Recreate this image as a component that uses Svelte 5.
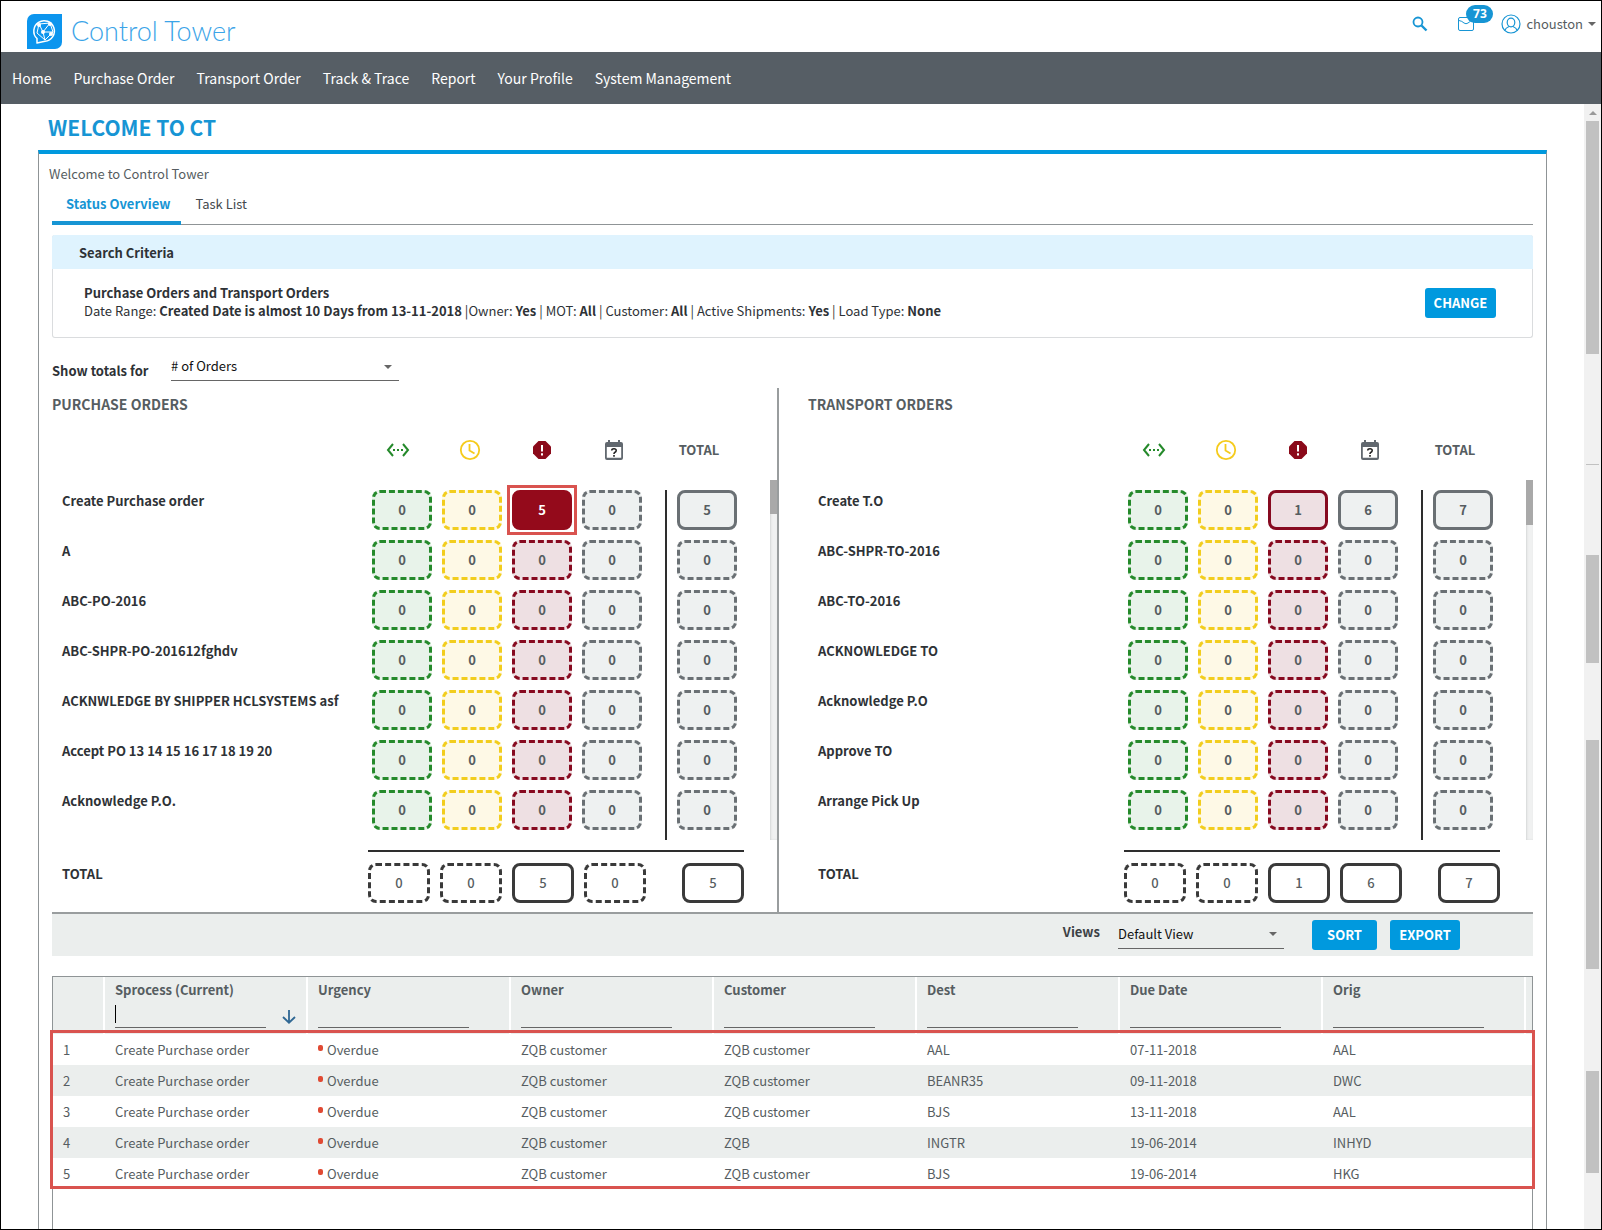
<script lang="ts">
	type Tone = 'green' | 'yellow' | 'red' | 'grey';
	type Row = { name: string; values: number[]; total: number };
	type Section = { id: string; title: string; rows: Row[]; totals: number[]; total: number };

	const tones: Tone[] = ['green', 'yellow', 'red', 'grey'];
	const menu = ['Home', 'Purchase Order', 'Transport Order', 'Track & Trace', 'Report', 'Your Profile', 'System Management'];

	const empty = (name: string): Row => ({ name, values: [0, 0, 0, 0], total: 0 });

	const sections: Section[] = [
		{
			id: 'po',
			title: 'PURCHASE ORDERS',
			rows: [
				{ name: 'Create Purchase order', values: [0, 0, 5, 0], total: 5 },
				empty('A'),
				empty('ABC-PO-2016'),
				empty('ABC-SHPR-PO-201612fghdv'),
				empty('ACKNWLEDGE BY SHIPPER HCLSYSTEMS asf'),
				empty('Accept PO 13 14 15 16 17 18 19 20'),
				empty('Acknowledge P.O.')
			],
			totals: [0, 0, 5, 0],
			total: 5
		},
		{
			id: 'to',
			title: 'TRANSPORT ORDERS',
			rows: [
				{ name: 'Create T.O', values: [0, 0, 1, 6], total: 7 },
				empty('ABC-SHPR-TO-2016'),
				empty('ABC-TO-2016'),
				empty('ACKNOWLEDGE TO'),
				empty('Acknowledge P.O'),
				empty('Approve TO'),
				empty('Arrange Pick Up')
			],
			totals: [0, 0, 1, 6],
			total: 7
		}
	];

	const columns = ['Sprocess (Current)', 'Urgency', 'Owner', 'Customer', 'Dest', 'Due Date', 'Orig'];
	const orders = [
		['Create Purchase order', 'Overdue', 'ZQB customer', 'ZQB customer', 'AAL', '07-11-2018', 'AAL'],
		['Create Purchase order', 'Overdue', 'ZQB customer', 'ZQB customer', 'BEANR35', '09-11-2018', 'DWC'],
		['Create Purchase order', 'Overdue', 'ZQB customer', 'ZQB customer', 'BJS', '13-11-2018', 'AAL'],
		['Create Purchase order', 'Overdue', 'ZQB customer', 'ZQB', 'INGTR', '19-06-2014', 'INHYD'],
		['Create Purchase order', 'Overdue', 'ZQB customer', 'ZQB customer', 'BJS', '19-06-2014', 'HKG']
	];

	// selected status box: section id, row, column
	let selected = $state('po-0-2');
	let tab = $state('status');
</script>

<div class="app">
	<header class="topbar">
		<a class="brand" href="#home">
			<svg width="35" height="35" viewBox="0 0 35 35">
				<path d="M7 0H35V28A7 7 0 0 1 28 35H0V7A7 7 0 0 1 7 0Z" fill="#0c95ee" />
				<g fill="none" stroke="#fff" stroke-width="1.5" stroke-linejoin="round">
					<path d="M10 24.500A10.300 10.300 0 1 1 18 27.300L10 29Z" />
					<path d="M12 10 23 9 26 18 18 26 10 19ZM12 10 16 18 26 18M23 9 16 18 18 26" stroke-width="1" />
				</g>
				<g fill="#fff"><circle cx="12" cy="11" r="2" /><circle cx="23" cy="10" r="2" /><circle cx="16" cy="18" r="2" /><circle cx="24" cy="20" r="2" /></g>
			</svg>
			<span>Control Tower</span>
		</a>
		<div class="tools">
			<button class="icon-btn" aria-label="Search">
				<svg width="16" height="16" viewBox="0 0 16 16" fill="none" stroke="#1795d4">
					<circle cx="6" cy="6" r="4.500" stroke-width="1.800" />
					<path d="M9.500 9.500 14.500 14.500" stroke-width="2.400" />
				</svg>
			</button>
			<button class="icon-btn mail" aria-label="Messages">
				<svg width="18" height="16" viewBox="0 0 18 16" fill="none" stroke="#1795d4">
					<rect x="1.500" y="1.500" width="15" height="13" rx="1.500" />
					<path d="M2 4.500Q5 5 7 7Q9 8.500 11 7Q13 5 16 4.500" />
				</svg>
				<span class="badge">73</span>
			</button>
			<button class="icon-btn user">
				<svg width="20" height="20" viewBox="0 0 20 20" fill="none" stroke="#1795d4" stroke-width="1.200">
					<circle cx="10" cy="10" r="9" />
					<ellipse cx="10" cy="8.500" rx="3.800" ry="4.300" />
					<path d="M3.800 16.500Q4.500 14 8 12.500M16.200 16.500Q15.500 14 12 12.500" />
				</svg>
				<span>chouston</span>
				<svg width="8" height="4" viewBox="0 0 8 4"><path d="M0 0H8L4 4Z" fill="#666" /></svg>
			</button>
		</div>
	</header>

	<nav class="menu">
		{#each menu as item}
			<a href="#menu">{item}</a>
		{/each}
	</nav>

	<div class="body">
		<main>
			<h1>WELCOME TO CT</h1>
			<div class="panel">
				<p class="intro">Welcome to Control Tower</p>
				<div class="tabs" role="tablist">
					<button role="tab" class:active={tab === 'status'} aria-selected={tab === 'status'} onclick={() => (tab = 'status')}>Status Overview</button>
					<button role="tab" class:active={tab === 'tasks'} aria-selected={tab === 'tasks'} onclick={() => (tab = 'tasks')}>Task List</button>
				</div>

				<section class="criteria">
					<h2>Search Criteria</h2>
					<div class="criteria-body">
						<p>
							<b>Purchase Orders and Transport Orders</b><br />
							Date Range: <b>Created Date is almost 10 Days from 13-11-2018</b> |Owner: <b>Yes</b> | MOT: <b>All</b> | Customer: <b>All</b> | Active Shipments: <b>Yes</b> | Load Type: <b>None</b>
						</p>
						<button class="btn">CHANGE</button>
					</div>
				</section>

				<div class="totals-for">
					<label for="totals">Show totals for</label>
					<div class="select">
						<select id="totals"><option># of Orders</option></select>
						<svg width="8" height="4" viewBox="0 0 8 4"><path d="M0 0H8L4 4Z" fill="#666" /></svg>
					</div>
				</div>

				<div class="overview">
					{#each sections as section, s}
						{#if s > 0}<div class="split"></div>{/if}
						<section class="status">
							<h3>{section.title}</h3>
							<div class="legend">
								<svg width="24" height="20" viewBox="0 0 24 20" fill="none" stroke="#258a2b" stroke-width="2">
									<path d="M7 4 2 10 7 16M17 4 22 10 17 16" />
									<path d="M7 10H17" stroke-dasharray="2 2" />
								</svg>
								<svg width="22" height="22" viewBox="0 0 22 22" fill="none" stroke="#f5cb1c" stroke-width="1.800">
									<circle cx="11" cy="11" r="9.200" />
									<path d="M10.500 5V11.500L15.500 14.500" />
								</svg>
								<svg width="20" height="20" viewBox="0 0 20 20">
									<path d="M6.500 1H13.500L19 6.500V13.500L13.500 19H6.500L1 13.500V6.500Z" fill="#8b0a1a" />
									<path d="M10 5V11.500M10 13.300V15.500" stroke="#fff" stroke-width="2" />
								</svg>
								<svg width="20" height="22" viewBox="0 0 20 22">
									<path d="M4 1H6V3H14V1H16V3H17A2 2 0 0 1 19 5V19A2 2 0 0 1 17 21H3A2 2 0 0 1 1 19V5A2 2 0 0 1 3 3H4ZM2.800 8V18.700H17.200V8Z" fill="#61686f" fill-rule="evenodd" />
									<path d="M7.700 11.500Q7.800 9.800 10 9.800Q12.300 9.800 12.200 11.600Q12 12.800 10.700 13.400Q10 13.900 10 15M10 16V17.800" fill="none" stroke="#222" stroke-width="1.600" />
								</svg>
								<b>TOTAL</b>
							</div>
							<div class="scroller">
								<div class="rows">
									{#each section.rows as row, r}
										<div class="row">
											<span class="name">{row.name}</span>
											{#each row.values as value, c}
												{@const key = `${section.id}-${r}-${c}`}
												<button
													class="box {tones[c]}"
													class:filled={value > 0}
													class:selected={selected === key}
													onclick={() => (selected = key)}>{value}</button>
											{/each}
											<span class="total"><button class="box grey" class:filled={row.total > 0}>{row.total}</button></span>
										</div>
									{/each}
								</div>
								<div class="track"><div class="thumb {section.id}"></div></div>
							</div>
							<div class="sum">
								<span class="name">TOTAL</span>
								<div class="sum-boxes">
									{#each section.totals as value}
										<button class="box dark" class:filled={value > 0}>{value}</button>
									{/each}
									<button class="box dark last" class:filled={section.total > 0}>{section.total}</button>
								</div>
							</div>
						</section>
					{/each}
				</div>

				<div class="toolbar">
					<label for="views">Views</label>
					<div class="select">
						<select id="views"><option>Default View</option></select>
						<svg width="8" height="4" viewBox="0 0 8 4"><path d="M0 0H8L4 4Z" fill="#666" /></svg>
					</div>
					<button class="btn sort">SORT</button>
					<button class="btn export">EXPORT</button>
				</div>

				<div class="grid">
					<table>
						<colgroup>
							<col class="num" />
							{#each columns as _}<col />{/each}
							<col class="end" />
						</colgroup>
						<thead>
							<tr>
								<th></th>
								{#each columns as column, i}
									<th>
										<label for="filter-{i}">{column}</label>
										<div class="filter">
											<input id="filter-{i}" type="text" />
											{#if i === 0}
												<i class="caret"></i>
												<svg width="14" height="14" viewBox="0 0 14 14" fill="none" stroke="#2f6793" stroke-width="1.800"><path d="M7 0V12.500M1 7 7 12.700 13 7" /></svg>
											{/if}
										</div>
									</th>
								{/each}
								<th></th>
							</tr>
						</thead>
						<tbody>
							{#each orders as order, n}
								<tr>
									<td>{n + 1}</td>
									{#each order as cell, i}
										<td>{#if i === 1}<i class="dot"></i>{/if}{cell}</td>
									{/each}
									<td></td>
								</tr>
							{/each}
						</tbody>
					</table>
					<div class="highlight"></div>
				</div>
			</div>
		</main>

		<div class="page-scroll">
			<svg width="8" height="4" viewBox="0 0 8 4"><path d="M0 4H8L4 0Z" fill="#999" /></svg>
			<div class="bar b1"></div>
			<div class="bar tick"></div>
			<div class="bar b2"></div>
			<div class="bar b3"></div>
			<div class="bar b4"></div>
		</div>
	</div>
</div>

<style>
	:global(body) {
		margin: 0;
	}
	.app,
	.app :global(*) {
		box-sizing: border-box;
	}
	.app {
		--blue: #0099de;
		--line: #8f9496;
		--soft: #ebeeed;
		display: flex;
		flex-direction: column;
		min-height: 100vh;
		border: 1px solid #000;
		background: #fff;
		color: #565d61;
		font: 13px/18px 'Noto Sans CJK SC', 'Noto Sans', sans-serif;
	}
	button,
	select,
	input {
		margin: 0;
		padding: 0;
		border: 0;
		background: none;
		color: inherit;
		font: inherit;
	}
	button {
		cursor: pointer;
	}
	svg {
		display: block;
		flex: none;
	}
	a {
		color: inherit;
		text-decoration: none;
	}

	.topbar {
		display: flex;
		justify-content: space-between;
		height: 51px;
		padding: 0 5px 0 26px;
	}
	.brand {
		display: flex;
		align-items: center;
		gap: 9px;
		padding-top: 9px;
		color: #3ba4e8;
		font: 300 27px/32px Lato, sans-serif;
	}
	.tools {
		display: flex;
		align-items: center;
		height: 46px;
	}
	.icon-btn {
		display: flex;
		align-items: center;
	}
	.mail {
		position: relative;
		margin: 0 26px 0 29px;
	}
	.badge {
		position: absolute;
		left: 9px;
		top: -11px;
		width: 27px;
		border-radius: 9px;
		background: #1795d4;
		color: #fff;
		font: bold 12px/18px 'Open Sans', sans-serif;
	}
	.user {
		gap: 5px;
	}

	.menu {
		display: flex;
		align-items: center;
		gap: 22px;
		height: 52px;
		padding: 0 11px;
		background: #565e65;
		color: #fff;
		font-size: 14px;
	}

	.body {
		display: flex;
		flex: 1;
	}
	main {
		display: flex;
		flex: 1;
		flex-direction: column;
		padding: 0 37px;
	}
	h1 {
		margin: 0;
		padding: 9px 10px;
		color: #1795d4;
		font-size: 21px;
		line-height: 28px;
	}
	.panel {
		flex: 1;
		display: flex;
		flex-direction: column;
		padding: 0 13px;
		border: 1px solid var(--line);
		border-width: 4px 1px 0;
		border-top-color: var(--blue);
	}
	.intro {
		margin: 0 -3px;
		padding: 11px 0 9px;
	}
	.tabs {
		display: flex;
		height: 33px;
		border-bottom: 1px solid var(--line);
		color: #44494d;
	}
	.tabs button {
		height: 33px;
		padding: 0 11px 5px 14px;
		border-bottom: 4px solid transparent;
	}
	.tabs .active {
		border-color: #1795d4;
		color: #1795d4;
		font-weight: bold;
	}

	.criteria {
		margin-top: 10px;
		border: 1px solid #dadcde;
		border-top: 0;
		border-radius: 3px;
		color: #2e3236;
	}
	.criteria h2 {
		margin: 0 -1px;
		padding: 9px 27px 7px;
		border-radius: 3px 3px 0 0;
		background: #dff3fe;
		font-size: 13px;
		line-height: 18px;
	}
	.criteria-body {
		display: flex;
		align-items: center;
		justify-content: space-between;
		height: 68px;
		padding: 0 36px 0 31px;
	}
	.criteria-body p {
		margin: 0 0 2px;
	}
	.btn {
		width: 71px;
		height: 30px;
		border-radius: 3px;
		background: var(--blue);
		color: #fff;
		font-weight: bold;
	}

	.totals-for {
		display: flex;
		height: 50px;
		color: #2e3236;
		font-weight: bold;
	}
	.totals-for label {
		width: 119px;
		padding-top: 24px;
	}
	.select {
		position: relative;
		display: flex;
		align-items: center;
		width: 228px;
		height: 28px;
		border-bottom: 1px solid #666;
		color: #111;
		font-weight: normal;
	}
	.totals-for .select {
		margin-top: 15px;
	}
	.totals-for select {
		padding-bottom: 2px;
	}
	.select select {
		width: 100%;
		height: 27px;
		appearance: none;
	}
	.select svg {
		position: absolute;
		right: 7px;
		pointer-events: none;
	}

	.overview {
		display: flex;
		border-bottom: 2px solid #999d9e;
	}
	.split {
		width: 2px;
		margin-right: 29px;
		background: #999d9e;
	}
	.status {
		flex: 1;
		min-width: 0;
		padding-bottom: 9px;
	}
	h3 {
		margin: 0;
		padding: 6px 0;
		font-size: 14px;
		line-height: 20px;
	}
	.legend {
		display: grid;
		grid-template-columns: repeat(4, 72px) 98px;
		justify-content: end;
		justify-items: center;
		align-items: center;
		height: 60px;
		padding-right: 29px;
	}
	.scroller {
		display: flex;
		height: 360px;
	}
	.rows {
		flex: 1;
		padding-top: 10px;
	}
	.row {
		display: flex;
		gap: 10px;
		height: 50px;
	}
	.name {
		flex: 1;
		padding-left: 10px;
		color: #2e3236;
		font-weight: bold;
		line-height: 22px;
	}
	.box {
		position: relative;
		width: 60px;
		height: 40px;
		border: 3px dashed;
		border-radius: 8px;
		color: #565d61;
		font-weight: bold;
		text-align: center;
	}
	.box.filled {
		border-style: solid;
	}
	.green {
		border-color: #258a2b;
		background: #e8f3ea;
	}
	.yellow {
		border-color: #f2cd1e;
		background: #fef9e6;
	}
	.red {
		border-color: #870a20;
		background: #eee0e3;
	}
	.grey {
		border-color: #6a7074;
		background: #eef1f1;
	}
	.dark {
		width: 62px;
		border-color: #3a3a3a;
		font-weight: 500;
	}
	.box.selected {
		background: #940a1b;
		border-color: #940a1b;
		color: #fff;
	}
	.box.selected::after {
		content: '';
		position: absolute;
		inset: -8px;
		border: 3px solid #d9534f;
	}
	.total {
		height: 50px;
		margin: 0 33px 0 13px;
		padding-left: 10px;
		border-left: 2px solid #2e2e2e;
	}
	.track {
		width: 7px;
		background: #f0f1f1;
		box-shadow: inset 1px 0 2px #d5d7d7;
	}
	.thumb {
		height: 34px;
		background: #a9a9a9;
	}
	.thumb.to {
		height: 45px;
	}
	.sum {
		display: flex;
		padding: 10px 33px 0 0;
	}
	.sum .name {
		padding-top: 13px;
	}
	.sum-boxes {
		display: flex;
		gap: 10px;
		padding-top: 11px;
		border-top: 2px solid #2e2e2e;
	}
	.last {
		margin-left: 26px;
	}

	.toolbar {
		display: flex;
		justify-content: flex-end;
		height: 42px;
		padding: 6px 73px 0 0;
		background: var(--soft);
	}
	.toolbar label {
		margin: 3px 18px 0 0;
		color: #3c4145;
		font-weight: bold;
	}
	.toolbar .select {
		width: 166px;
		height: 29px;
		margin-right: 28px;
	}
	.toolbar .sort {
		width: 65px;
		margin-right: 13px;
	}
	.toolbar .export {
		width: 70px;
	}

	.grid {
		position: relative;
		flex: 1;
		margin-top: 20px;
		border: 1px solid var(--line);
		border-bottom: 0;
	}
	table {
		width: 100%;
		border-collapse: separate;
		border-spacing: 0;
		table-layout: fixed;
	}
	.num {
		width: 52px;
	}
	.end {
		width: 6px;
	}
	th {
		height: 57px;
		padding: 4px 0 0 10px;
		border-right: 2px solid #fff;
		background: var(--soft);
		text-align: left;
		vertical-align: top;
	}
	th:last-child,
	td:last-child {
		padding: 0;
		border: 0;
	}
	th label {
		display: block;
	}
	.filter {
		position: relative;
		display: flex;
		align-items: flex-end;
		gap: 16px;
	}
	.filter input {
		width: 151px;
		height: 29px;
		border-bottom: 1px solid #666;
		outline: none;
	}
	.filter svg {
		margin-bottom: 4px;
	}
	.caret {
		position: absolute;
		left: 0;
		top: 6px;
		width: 1px;
		height: 18px;
		background: #000;
	}
	td {
		height: 31px;
		padding: 0 0 0 10px;
	}
	tbody tr:nth-child(even) {
		background: var(--soft);
	}
	.dot {
		display: inline-block;
		width: 5px;
		height: 6px;
		margin-right: 4px;
		border-radius: 2px;
		background: #e04a33;
		vertical-align: 4px;
	}
	.highlight {
		position: absolute;
		inset: 53px -3px auto;
		height: 159px;
		border: 3px solid #d9534f;
		pointer-events: none;
	}

	.page-scroll {
		display: flex;
		flex-direction: column;
		align-items: center;
		width: 17px;
		padding-top: 7px;
		background: #f1f1f1;
	}
	.bar {
		width: 13px;
		background: #c1c1c1;
	}
	.b1 {
		height: 233px;
		margin-top: 6px;
	}
	.tick {
		height: 1px;
		margin-top: 110px;
	}
	.b2 {
		height: 108px;
		margin-top: 90px;
	}
	.b3 {
		height: 229px;
		margin-top: 77px;
	}
	.b4 {
		height: 102px;
		margin-top: 102px;
	}
</style>
